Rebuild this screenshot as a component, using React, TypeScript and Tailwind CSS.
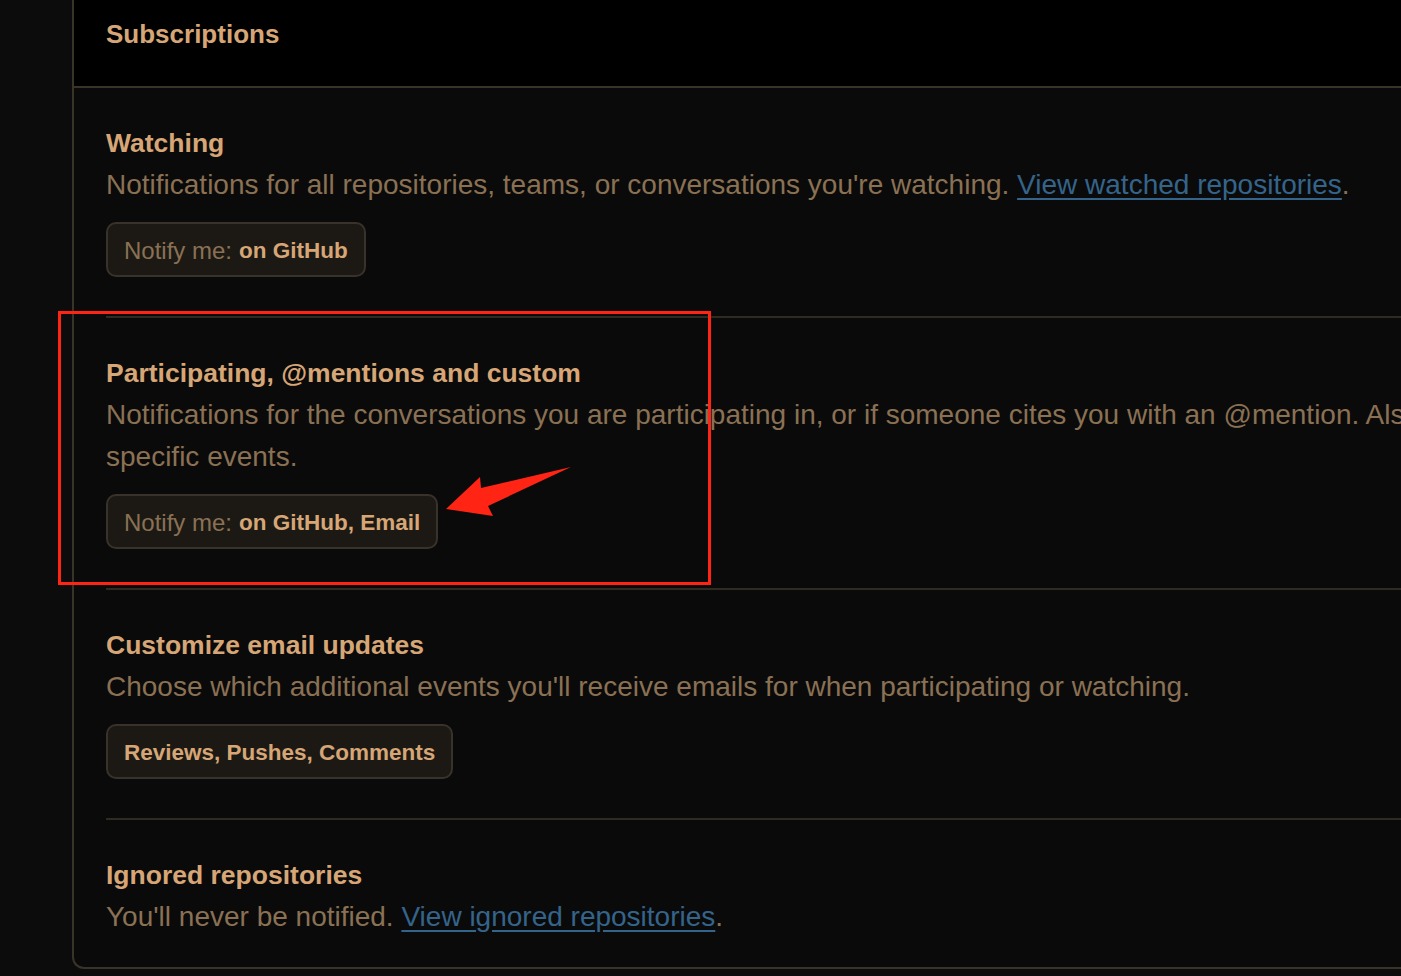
export default function App() {
  const font = { fontFamily: '"Liberation Sans", Arial, sans-serif' };
  return (
    <div className="relative min-h-[976px] w-[1401px] overflow-hidden bg-[#0c0c0c]" style={font}>
      <div className="ml-[72px] h-[969px] overflow-hidden rounded-bl-[12px] border-b-2 border-l-2 border-[#3a3328] bg-[#0a0a0a]">
        <div className="flex h-[88px] items-start border-b-2 border-[#3a3328] bg-black pl-[32px] pt-[14px]">
          <h2 className="text-[26px] font-bold leading-[40px] text-[#d6a676]">Subscriptions</h2>
        </div>
        <div className="pl-[32px]">
          <Section title="Watching" desc={<>Notifications for all repositories, teams, or conversations you're watching. <a className="text-[#35648a] underline underline-offset-4">View watched repositories</a>.</>}>
            <Pill label="Notify me:" value="on GitHub" />
          </Section>
          <Section title="Participating, @mentions and custom" desc={<>Notifications for the conversations you are participating in, or if someone cites you with an @mention. Also for all activity when subscribed to<br />specific events.</>}>
            <Pill label="Notify me:" value="on GitHub, Email" />
          </Section>
          <Section title="Customize email updates" desc="Choose which additional events you'll receive emails for when participating or watching.">
            <Pill value="Reviews, Pushes, Comments" />
          </Section>
          <Section last title="Ignored repositories" desc={<>You'll never be notified. <a className="text-[#35648a] underline underline-offset-4">View ignored repositories</a>.</>} />
        </div>
      </div>
      <div className="pointer-events-none absolute left-[58px] top-[311px] h-[274px] w-[653px] border-[3px] border-[#ff2414]" />
      <svg className="pointer-events-none absolute left-0 top-0" width="1401" height="976">
        <polygon points="446,509 480,477 481,488 571,467 488,506 493,516" fill="#ff2414" />
      </svg>
    </div>
  );
}

function Section({ title, desc, children, last }: { title: string; desc: React.ReactNode; children?: React.ReactNode; last?: boolean }) {
  return (
    <div className={last ? "pt-[34px] pb-[30px]" : "border-b-2 border-[#2f2a22] pt-[34px] pb-[39px]"}>
      <h3 className="text-[26.5px] font-bold leading-[42px] text-[#d6a676]">{title}</h3>
      <p className="w-[1800px] text-[28px] leading-[42px] text-[#8a7154]">{desc}</p>
      {children && <div className="mt-[16px]">{children}</div>}
    </div>
  );
}

function Pill({ label, value }: { label?: string; value: string }) {
  return (
    <div className="inline-flex h-[55px] items-center rounded-[10px] border-2 border-[#38322a] bg-[#1c1915] px-[16px] pt-[2px]">
      {label && <span className="mr-[7px] text-[24px] text-[#8a7154]">{label}</span>}
      <span className="text-[22.5px] font-bold text-[#d6a676]">{value}</span>
    </div>
  );
}
